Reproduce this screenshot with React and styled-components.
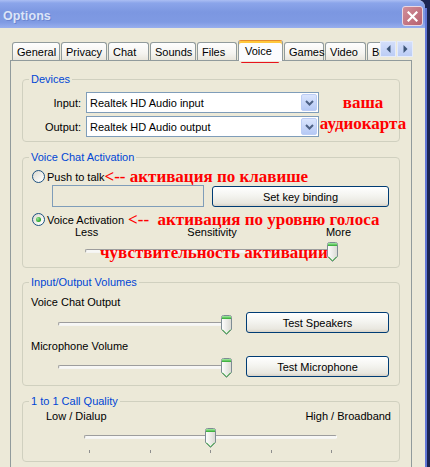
import React from 'react';
import styled, { createGlobalStyle } from 'styled-components';

const GlobalStyle = createGlobalStyle`
  html, body { margin: 0; padding: 0; background: #1c2552; }
  body { font-family: "Liberation Sans", Arial, sans-serif; font-size: 11px; color: #000; }
`;

const Screen = styled.div`
  display: flex;
  width: 430px;
  height: 467px;
  overflow: hidden;
  background: #1c2552;
`;

const Window = styled.div`
  width: 425px;
  flex: none;
  display: flex;
  flex-direction: column;
  background: #ece9d8;
  border-top-right-radius: 7px;
  overflow: hidden;
`;

const Edge = styled.div`
  width: 5px;
  flex: none;
  margin-top: 8px;
  background: linear-gradient(to right, #6277d6 0 2px, #1c2552 2px);
`;

const TitleBar = styled.div`
  height: 28px;
  flex: none;
  box-sizing: border-box;
  display: flex;
  align-items: center;
  justify-content: space-between;
  padding: 4px 2px 0 3px;
  background: linear-gradient(#abbef3 0, #8ba5ea 3px, #7c97e1 12px, #7f9ae3 22px, #98afee 28px);
`;

const Title = styled.span`
  font-weight: bold;
  font-size: 12.5px;
  color: #dbe4f8;
  text-shadow: 1px 1px 0 #6c85d0;
  letter-spacing: 0.1px;
`;

const CloseBtn = styled.div`
  width: 21px;
  height: 20px;
  box-sizing: border-box;
  border: 1px solid #ead7e2;
  border-radius: 3px;
  background: linear-gradient(135deg, #d08e9a, #b7606f);
  display: flex;
  align-items: center;
  justify-content: center;
`;

const Body = styled.div`
  flex: 1;
  display: flex;
  flex-direction: column;
  padding: 12px 13px 0 10px;
`;

const TabStrip = styled.div`
  position: relative;
  z-index: 1;
  display: flex;
  height: 23px;
  margin-bottom: -3px;
  padding-left: 2px;
`;

const TabScroller = styled.div`
  width: 368px;
  flex: none;
  display: flex;
  align-items: flex-end;
  gap: 1px;
  overflow: hidden;
`;

const Tab = styled.div`
  position: relative;
  flex: none;
  box-sizing: border-box;
  width: ${p => p.$w}px;
  height: ${p => (p.$active ? 21 : 18)}px;
  margin-bottom: ${p => (p.$active ? 2 : 3)}px;
  padding-left: ${p => (p.$active ? 6 : 4)}px;
  display: flex;
  align-items: center;
  white-space: nowrap;
  border: 1px solid #919b9c;
  border-bottom: none;
  border-top-color: ${p => (p.$active ? '#e68b2c' : '#919b9c')};
  border-radius: 3px 3px 0 0;
  background: ${p => (p.$active ? '#fcfcfe' : 'linear-gradient(#fefefe, #f5f4f0 60%, #e9e6dc)')};
  box-shadow: ${p => (p.$active ? 'inset 0 2px 0 #ffc83c' : 'none')};

  ${p => p.$active && `
    &::after {
      content: '';
      position: absolute;
      left: 2px;
      right: 3px;
      top: 21px;
      height: 2px;
      border-radius: 1px;
      background: #e8141c;
    }
  `}
`;

const ScrollArrows = styled.div`
  display: flex;
  gap: 1px;
  align-self: flex-start;
  margin-top: 1px;
`;

const ArrowBtn = styled.div`
  width: 16px;
  height: 16px;
  box-sizing: border-box;
  border: 1px solid #e4ebfb;
  background: linear-gradient(#d3defa, #bccdf5);
  display: flex;
  align-items: center;
  justify-content: center;
`;

const Panel = styled.div`
  flex: 1;
  box-sizing: border-box;
  width: 402px;
  border: 1px solid #919b9c;
  border-bottom: none;
  padding: 12px 11px 0 11px;
`;

const Group = styled.fieldset`
  margin: ${p => p.$mt || 0}px 0 0 0;
  padding: ${p => p.$pt}px 8px ${p => p.$pb}px 8px;
  border: 1px solid #d0d0bf;
  border-radius: 4px;
  min-width: 0;
`;

const Legend = styled.legend`
  padding: 0 2px;
  margin-left: -2px;
  font-size: 11px;
  line-height: 13px;
  color: #0046d5;
`;

const Note = styled.span`
  font-family: "Liberation Serif", "Times New Roman", serif;
  font-weight: bold;
  font-size: 17px;
  line-height: ${p => p.$lh || 13}px;
  color: #ff0000;
  white-space: pre;
`;

const DeviceGrid = styled.div`
  display: grid;
  grid-template-columns: 53px 233px 84px;
  grid-template-rows: 21px 21px;
  column-gap: 2px;
  row-gap: 3px;
  align-items: center;
`;

const FieldLabel = styled.span`
  text-align: right;
  padding-right: 3px;
`;

const Combo = styled.div`
  box-sizing: border-box;
  height: 21px;
  border: 1px solid #7f9db9;
  background: #fff;
  display: flex;
  align-items: center;
  padding: 0 1px 0 3px;
`;

const ComboText = styled.span`
  flex: 1;
  white-space: nowrap;
`;

const DropBtn = styled.span`
  width: 16px;
  height: 17px;
  box-sizing: border-box;
  border: 1px solid #bccdf5;
  border-radius: 2px;
  background: linear-gradient(#dae5fd, #b6c9f5);
  display: flex;
  align-items: center;
  justify-content: center;
`;

const DeviceNote = styled.div`
  grid-column: 3;
  grid-row: 1 / span 2;
  align-self: start;
  display: flex;
  flex-direction: column;
  align-items: center;
`;

const RadioRow = styled.div`
  display: flex;
  align-items: center;
  height: 13px;
  margin-top: ${p => p.$mt || 0}px;
  padding-left: 1px;
  white-space: nowrap;
`;

const Radio = styled.span`
  flex: none;
  width: 13px;
  height: 13px;
  box-sizing: border-box;
  margin-right: 2px;
  border-radius: 50%;
  border: 1px solid #1c5180;
  background: linear-gradient(135deg, #dcd9cf, #fbfbf9 80%);
  display: flex;
  align-items: center;
  justify-content: center;

  &::after {
    content: '';
    width: 5px;
    height: 5px;
    border-radius: 50%;
    background: ${p => (p.$checked ? 'radial-gradient(circle at 35% 35%, #9be59b, #21a121 70%)' : 'transparent')};
  }
`;

const KeyRow = styled.div`
  display: flex;
  align-items: flex-start;
  gap: 8px;
  margin: 2px 0 0 21px;
`;

const TextBox = styled.div`
  width: 152px;
  height: 22px;
  box-sizing: border-box;
  border: 1px solid #7f9db9;
  background: #ece9d8;
`;

const Button = styled.button`
  width: ${p => p.$w}px;
  height: 21px;
  margin: ${p => p.$mt || 0}px 0 0 ${p => p.$ml || 0}px;
  flex: none;
  box-sizing: border-box;
  padding: 0;
  border: 1px solid #003c74;
  border-radius: 3px;
  background: linear-gradient(#ffffff, #f4f4f0 45%, #e9e7df 85%, #d8d3c8);
  font-family: "Liberation Sans", Arial, sans-serif;
  font-size: 11px;
  color: #000;
`;

const ScaleLabels = styled.div`
  display: flex;
  justify-content: space-between;
  width: ${p => p.$w}px;
  margin-left: ${p => p.$ml}px;
  height: 13px;
  line-height: 13px;
`;

const SliderRow = styled.div`
  position: relative;
  display: flex;
  align-items: flex-start;
  margin-top: ${p => p.$mt || 0}px;
`;

const SliderBox = styled.div`
  position: relative;
  flex: none;
  width: ${p => p.$w}px;
  height: 20px;
  margin: ${p => p.$mt || 0}px 0 0 ${p => p.$ml}px;
`;

const Track = styled.div`
  margin-top: 7px;
  height: 4px;
  box-sizing: border-box;
  border: 1px solid;
  border-color: #9d9d9d #fdfdfd #f4f4f2 #9d9d9d;
  border-radius: 2px;
  background: #f7f7f5;
`;

const Thumb = styled.svg`
  position: absolute;
  top: 0;
`;

const SliderNote = styled(Note)`
  position: absolute;
  z-index: 2;
  left: 69px;
  top: 1px;
  line-height: 20px;
`;

const Text = styled.div`
  height: 13px;
  line-height: 13px;
  margin-top: ${p => p.$mt || 0}px;
  white-space: nowrap;
`;

const Ticks = styled.div`
  display: flex;
  justify-content: space-between;
  width: 243px;
  margin: 2px 0 0 58px;
`;

const Tick = styled.span`
  width: 1px;
  height: 3px;
  background: #8e8e8e;
`;

const Chevron = () => (
  <svg width="9" height="6" viewBox="0 0 9 6">
    <path d="M1 1 L4.5 4.5 L8 1" fill="none" stroke="#4d6185" strokeWidth="2" />
  </svg>
);

const Slider = ({ width, value, ml, mt }) => (
  <SliderBox $w={width} $ml={ml} $mt={mt}>
    <Track />
    <Thumb
      width="11"
      height="20"
      viewBox="0 0 11 20"
      style={{ left: `${6 + value * (width - 12) - 5.5}px` }}
    >
      <defs>
        <linearGradient id="thumbBody" x1="0" x2="1">
          <stop offset="0" stopColor="#ffffff" />
          <stop offset="1" stopColor="#d9d9d2" />
        </linearGradient>
        <linearGradient id="thumbTop" x1="0" x2="0" y1="0" y2="1">
          <stop offset="0" stopColor="#a5eca5" />
          <stop offset="1" stopColor="#2ea82e" />
        </linearGradient>
      </defs>
      <path d="M0.5 2.5 Q0.5 0.5 2.5 0.5 H8.5 Q10.5 0.5 10.5 2.5 V14.5 L5.5 19.5 L0.5 14.5 Z" fill="url(#thumbBody)" stroke="#7e8c94" />
      <rect x="1" y="1" width="9" height="3" fill="url(#thumbTop)" />
      <path d="M1.3 14.6 L5.5 18.8 L9.7 14.6" fill="none" stroke="#3fb23f" strokeWidth="1" />
    </Thumb>
  </SliderBox>
);

const tabs = [
  ['General', 48],
  ['Privacy', 46],
  ['Chat', 41],
  ['Sounds', 46],
  ['Files', 40],
  ['Voice', 45, true],
  ['Games', 40],
  ['Video', 41],
  ['Browser', 60],
];

export default function App() {
  return (
    <>
      <GlobalStyle />
      <Screen>
        <Window>
          <TitleBar>
            <Title>Options</Title>
            <CloseBtn>
              <svg width="11" height="11" viewBox="0 0 11 11">
                <path d="M1.5 1.5 L9.5 9.5 M9.5 1.5 L1.5 9.5" stroke="#fff" strokeWidth="2.2" strokeLinecap="square" />
              </svg>
            </CloseBtn>
          </TitleBar>

          <Body>
            <TabStrip>
              <TabScroller>
                {tabs.map(([name, w, active]) => (
                  <Tab key={name} $w={w} $active={active}>{name}</Tab>
                ))}
              </TabScroller>
              <ScrollArrows>
                <ArrowBtn>
                  <svg width="5" height="8" viewBox="0 0 5 8"><path d="M4.5 0 V8 L0.5 4 Z" fill="#3c5578" /></svg>
                </ArrowBtn>
                <ArrowBtn>
                  <svg width="5" height="8" viewBox="0 0 5 8"><path d="M0.5 0 V8 L4.5 4 Z" fill="#3c5578" /></svg>
                </ArrowBtn>
              </ScrollArrows>
            </TabStrip>

            <Panel>
              <Group $pt={6} $pb={4}>
                <Legend>Devices</Legend>
                <DeviceGrid>
                  <FieldLabel>Input:</FieldLabel>
                  <Combo>
                    <ComboText>Realtek HD Audio input</ComboText>
                    <DropBtn><Chevron /></DropBtn>
                  </Combo>
                  <DeviceNote>
                    <Note $lh={21}>ваша</Note>
                    <Note $lh={21}>аудиокарта</Note>
                  </DeviceNote>
                  <FieldLabel>Output:</FieldLabel>
                  <Combo>
                    <ComboText>Realtek HD Audio output</ComboText>
                    <DropBtn><Chevron /></DropBtn>
                  </Combo>
                </DeviceGrid>
              </Group>

              <Group $mt={9} $pt={6} $pb={5}>
                <Legend>Voice Chat Activation</Legend>
                <RadioRow>
                  <Radio />
                  Push to talk
                  <Note>{'<-- активация по клавише'}</Note>
                </RadioRow>
                <KeyRow>
                  <TextBox />
                  <Button $w={177} $mt={1}>Set key binding</Button>
                </KeyRow>
                <RadioRow $mt={6}>
                  <Radio $checked />
                  Voice Activation
                  <Note style={{ marginLeft: 4 }}>{'<--  активация по уровню голоса'}</Note>
                </RadioRow>
                <ScaleLabels $w={276} $ml={44}>
                  <span>Less</span>
                  <span>Sensitivity</span>
                  <span>More</span>
                </ScaleLabels>
                <SliderRow $mt={3}>
                  <Slider width={253} value={1} ml={54} />
                  <SliderNote>чувствительность активации</SliderNote>
                </SliderRow>
              </Group>

              <Group $mt={8} $pt={7} $pb={7}>
                <Legend>Input/Output Volumes</Legend>
                <Text>Voice Chat Output</Text>
                <SliderRow $mt={3}>
                  <Slider width={174} value={1} ml={27} mt={3} />
                  <Button $w={143} $ml={14}>Test Speakers</Button>
                </SliderRow>
                <Text $mt={5}>Microphone Volume</Text>
                <SliderRow $mt={3}>
                  <Slider width={174} value={1} ml={27} mt={2} />
                  <Button $w={143} $ml={14}>Test Microphone</Button>
                </SliderRow>
              </Group>

              <Group $mt={9} $pt={2} $pb={8}>
                <Legend>1 to 1 Call Quality</Legend>
                <ScaleLabels $w={345} $ml={15}>
                  <span>Low / Dialup</span>
                  <span>High / Broadband</span>
                </ScaleLabels>
                <SliderRow $mt={5}>
                  <Slider width={253} value={0.5} ml={53} />
                </SliderRow>
                <Ticks>
                  {[0, 1, 2, 3, 4].map(i => <Tick key={i} />)}
                </Ticks>
              </Group>
            </Panel>
          </Body>
        </Window>
        <Edge />
      </Screen>
    </>
  );
}
